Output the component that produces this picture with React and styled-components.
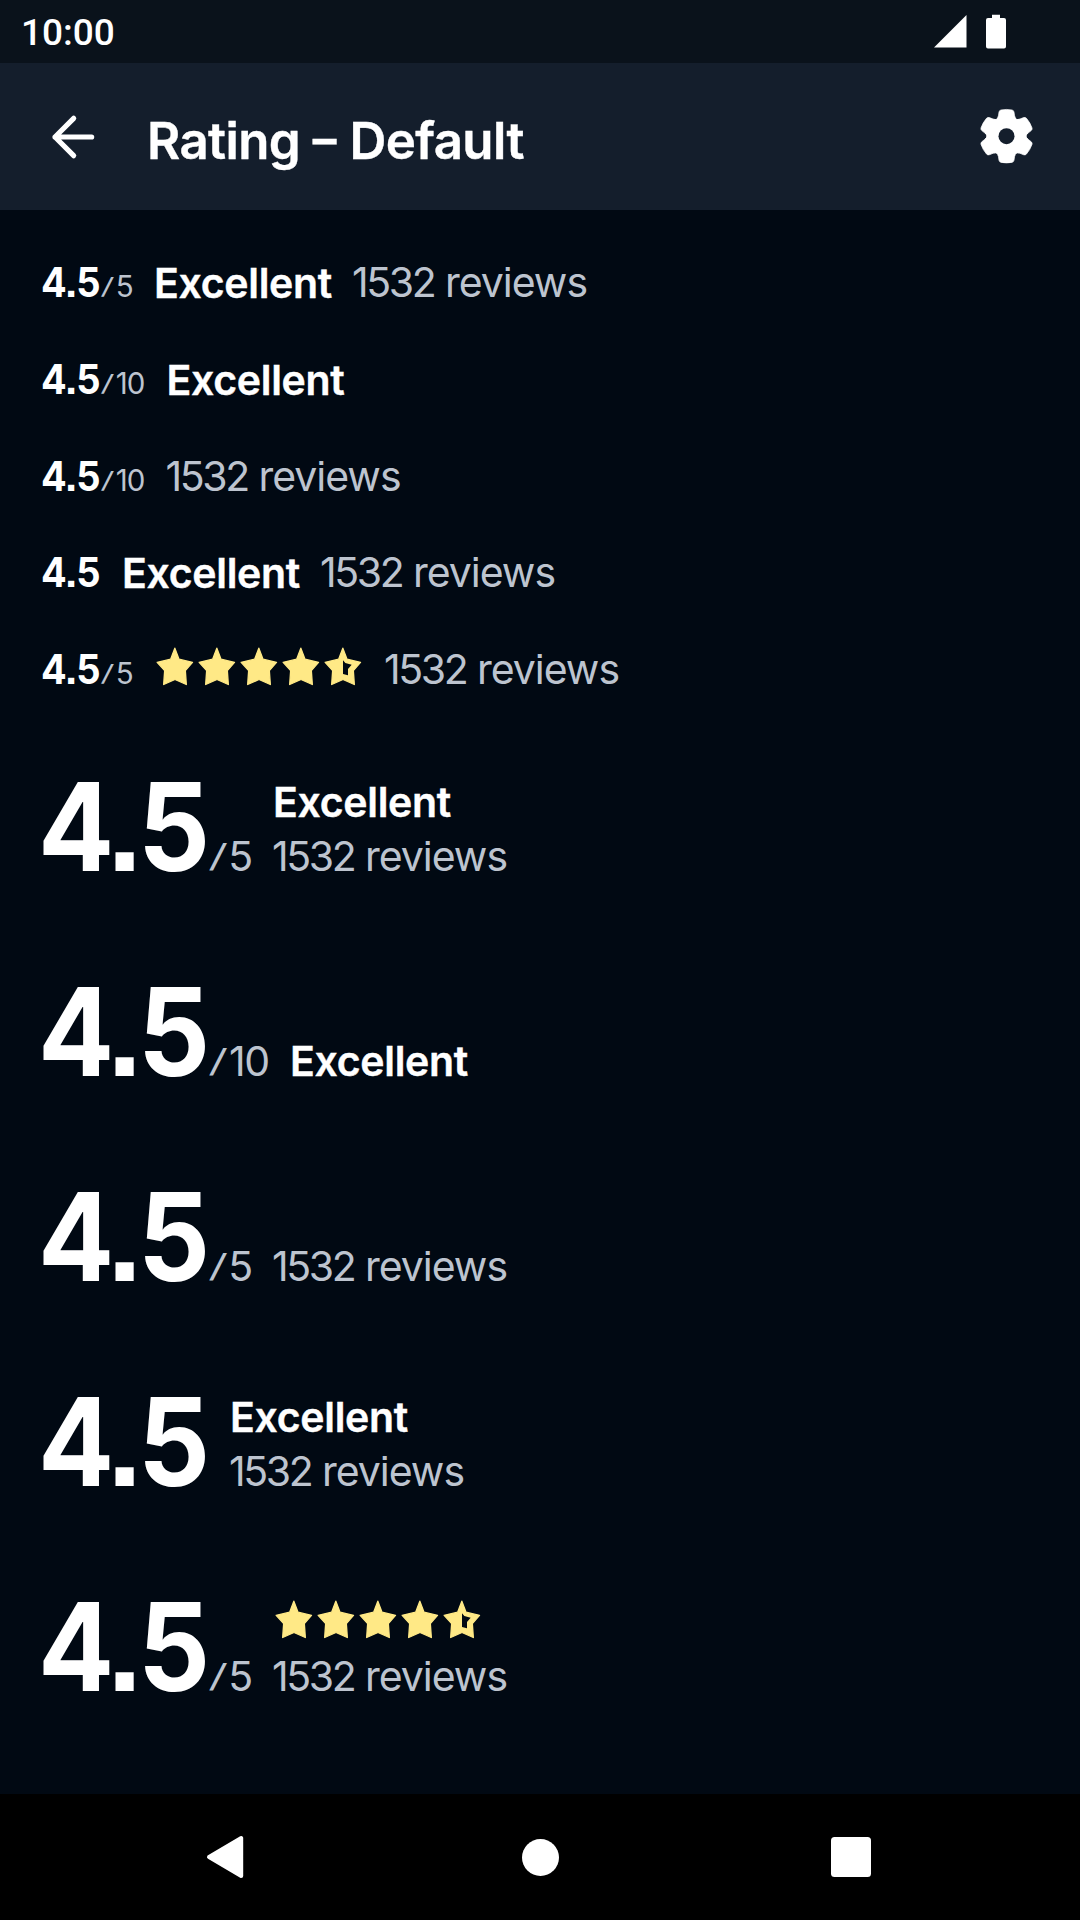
import React from 'react';
import styled, { createGlobalStyle } from 'styled-components';

const color = {
  canvas: '#010913',
  status: '#0a121b',
  header: '#141e2c',
  text: '#ffffff',
  secondary: '#bdc4cf',
  star: '#ffe986',
};

const GlobalStyle = createGlobalStyle`
  *, *::before, *::after { box-sizing: border-box; }
  body {
    margin: 0;
    background: ${color.canvas};
    font-family: Inter, "Liberation Sans", sans-serif;
    font-feature-settings: "ss07";
  }
  svg { display: block; flex: none; }
`;

const Screen = styled.div`
  display: flex;
  flex-direction: column;
  width: 1080px;
  height: 1920px;
  overflow: hidden;
  background: ${color.canvas};
  color: ${color.text};
`;

const StatusBar = styled.header`
  display: flex;
  flex: none;
  align-items: center;
  height: 63px;
  padding: 0 74px 0 21px;
  background: ${color.status};
`;

const Clock = styled.time`
  flex: 1;
  padding-top: 3px;
  font: 500 37px/44px Roboto, sans-serif;
`;

const StatusIcons = styled.div`
  display: flex;
  gap: 19px;
`;

const AppBar = styled.nav`
  display: flex;
  flex: none;
  align-items: center;
  height: 147px;
  padding: 0 42px 0 44px;
  background: ${color.header};
`;

const Title = styled.h1`
  flex: 1;
  margin: 0 0 0 47px;
  padding-top: 8px;
  font-size: 51px;
  font-weight: 600;
  line-height: 62px;
  letter-spacing: -0.6px;
  white-space: nowrap;
  -webkit-text-stroke: 0.4px ${color.text};
`;

const Dash = styled.span`
  display: inline-block;
  transform: translate(0, -2px) scaleX(0.93);
`;

const Content = styled.main`
  flex: 1;
  min-height: 0;
  padding: 42px 42px 0;
`;

const SmallList = styled.section`
  display: grid;
  grid-template-rows: 97px 97px 96px 97px 97px;
`;

const LargeList = styled.section`
  display: grid;
  grid-auto-rows: 205px;
  padding-top: 34px;
`;

const Rating = styled.div`
  display: flex;
  align-items: ${(p) => (p.$large ? 'flex-end' : 'flex-start')};
  height: ${(p) => (p.$large ? 113 : 60)}px;
  white-space: nowrap;
`;

const Score = styled.span`
  flex: none;
  width: ${(p) => (p.$large ? 171 : 60)}px;
  margin-left: ${(p) => (p.$large ? -4 : -1)}px;
  font-size: ${(p) => (p.$large ? 122 : 40.5)}px;
  font-weight: 700;
  line-height: ${(p) => (p.$large ? 113 : 62)}px;
  letter-spacing: ${(p) => (p.$large ? '-0.042em' : '-0.022em')};
  transform: scaleX(${(p) => (p.$large ? 0.925 : 0.94)});
  transform-origin: left;
`;

const Scale = styled.span`
  display: flex;
  flex: none;
  width: ${(p) => p.$width}px;
  font-size: ${(p) => (p.$large ? 41 : 29.5)}px;
  font-weight: 400;
  line-height: ${(p) => (p.$large ? 54 : 68)}px;
  letter-spacing: -0.03em;
  color: ${color.secondary};
`;

const Slash = styled.span`
  width: 0.5em;
  font-weight: 300;
  transform: translate(-0.03em, -0.02em) scale(1.45, 0.77);
  transform-origin: left;
`;

const Details = styled.div`
  display: flex;
  flex-direction: ${(p) => (p.$large ? 'column' : 'row')};
  gap: ${(p) => (p.$large ? 0 : 21)}px;
  margin-left: 21px;
`;

const Label = styled.strong`
  width: 178px;
  padding-top: ${(p) => (p.$large ? 0 : 1)}px;
  font-size: 41px;
  font-weight: 600;
  line-height: ${(p) => (p.$large ? 54 : 60)}px;
  letter-spacing: -0.3px;
  -webkit-text-stroke: 0.4px ${color.text};
`;

const Reviews = styled.span`
  margin-left: -1px;
  font-size: 41px;
  font-weight: 400;
  line-height: ${(p) => (p.$large ? 54 : 60)}px;
  letter-spacing: -1px;
  color: ${color.secondary};
`;

const Count = styled.span`
  letter-spacing: -2.4px;
`;

const Stars = styled.div`
  display: flex;
  align-items: flex-start;
  height: ${(p) => (p.$large ? 54 : 60)}px;
  padding-top: ${(p) => (p.$large ? 3 : 6)}px;
`;

const NavBar = styled.footer`
  display: grid;
  flex: none;
  grid-template-columns: 315px 315px 307px;
  place-items: center;
  height: 126px;
  padding-left: 67.5px;
  background: #000;
`;

const STAR =
  'M62.5 9.5L75 42.5L115.5 52L94 77L97 118.5L63 103.5L29 118.5L32 77L9.5 52L50 42.5Z';
const STAR_HOLE = 'M63 46L70 54L89 59L78 72V91L63 87Z';

function Star({ half }) {
  return (
    <svg width="42" height="42" viewBox="0 0 126 126">
      <path d={STAR} fill={color.star} stroke={color.star} strokeWidth="4" strokeLinejoin="round" />
      {half && <path d={STAR_HOLE} fill={color.canvas} />}
    </svg>
  );
}

const TOOTH =
  'M-38.2 -49.8C-30.8 -46.7 -25 -50 -24 -58L-22 -71Q-21 -76 -16 -77Q0 -80 16 -77Q21 -76 22 -71L24 -58C25 -50 30.8 -46.7 38.2 -49.8L0 0Z';

function Gear() {
  return (
    <svg width="63" height="63" viewBox="-92.5 -91.5 185 185" fill="#fff">
      {[0, 60, 120, 180, 240, 300].map((a) => (
        <path key={a} d={TOOTH} stroke="#fff" strokeWidth="2" transform={`rotate(${a})`} />
      ))}
      <circle r="36" fill="none" stroke="#fff" strokeWidth="24" />
      <circle r="23.5" fill={color.header} />
    </svg>
  );
}

function BackArrow() {
  return (
    <svg width="56" height="56" viewBox="0 0 168 168" fill="none" stroke="#fff" strokeWidth="15.5" strokeLinecap="round" strokeLinejoin="round">
      <path d="M143 84H33M89 28L33 84L89 140" />
    </svg>
  );
}

function RatingRow({ large, scale, label, reviews, stars }) {
  const widths = large ? [43, 60] : [32, 44.5];
  return (
    <Rating $large={large}>
      <Score $large={large}>4.5</Score>
      {scale && (
        <Scale $large={large} $width={widths[scale === 10 ? 1 : 0]}>
          <Slash>/</Slash>
          <span>{scale}</span>
        </Scale>
      )}
      <Details $large={large}>
        {label && <Label $large={large}>Excellent</Label>}
        {stars && (
          <Stars $large={large}>
            <Star />
            <Star />
            <Star />
            <Star />
            <Star half />
          </Stars>
        )}
        {reviews && (
          <Reviews $large={large}>
            <Count>1532</Count> reviews
          </Reviews>
        )}
      </Details>
    </Rating>
  );
}

export default function App() {
  return (
    <Screen>
      <GlobalStyle />
      <StatusBar>
        <Clock>10:00</Clock>
        <StatusIcons>
          <svg width="33" height="36" viewBox="0 0 33 36" fill="#fff">
            <path d="M0 33.5L32.5 1V33.5Z" />
          </svg>
          <svg width="20" height="36" viewBox="0 0 20 36" fill="#fff">
            <path d="M6 .8H14V4H18Q20 4 20 6V32.5Q20 34.5 18 34.5H2Q0 34.5 0 32.5V6Q0 4 2 4H6Z" />
          </svg>
        </StatusIcons>
      </StatusBar>
      <AppBar>
        <BackArrow />
        <Title>
          Rating <Dash>–</Dash> Default
        </Title>
        <Gear />
      </AppBar>
      <Content>
        <SmallList>
          <RatingRow scale={5} label reviews />
          <RatingRow scale={10} label />
          <RatingRow scale={10} reviews />
          <RatingRow label reviews />
          <RatingRow scale={5} stars reviews />
        </SmallList>
        <LargeList>
          <RatingRow large scale={5} label reviews />
          <RatingRow large scale={10} label />
          <RatingRow large scale={5} reviews />
          <RatingRow large label reviews />
          <RatingRow large scale={5} stars reviews />
        </LargeList>
      </Content>
      <NavBar>
        <svg width="38" height="44" viewBox="0 0 38 44" fill="#fff" stroke="#fff" strokeWidth="4" strokeLinejoin="round">
          <path d="M3 22L35.2 3V41Z" />
        </svg>
        <svg width="37" height="37" viewBox="0 0 37 37" fill="#fff">
          <circle cx="18.5" cy="18.5" r="18.5" />
        </svg>
        <svg width="40" height="40" viewBox="0 0 40 40" fill="#fff">
          <rect width="40" height="40" rx="3.5" />
        </svg>
      </NavBar>
    </Screen>
  );
}
